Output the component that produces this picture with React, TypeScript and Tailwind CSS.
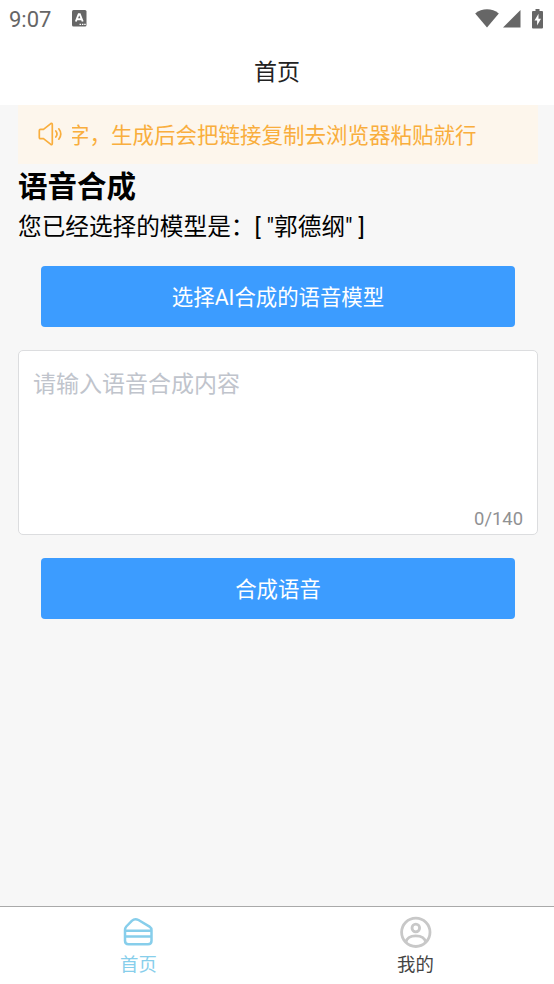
import { useState } from 'react';

const MAX_LENGTH = 140;

function StatusBar() {
  return (
    <div className="flex h-[37px] shrink-0 items-center justify-between px-[10px] text-[#666666]">
      <div className="-ml-px flex items-center">
        <span className="w-[63px] pt-[2px] text-[22px] leading-[36px]">9:07</span>
        <svg width="15" height="17" viewBox="0 0 15 17">
          <rect width="14.5" height="16.5" rx="1.500" fill="#666666" />
          <path d="M3.800 11.500 6.700 4.200h1.100l2.900 7.300M5 9.200h4.500" fill="none" stroke="#fff" strokeWidth="1.900" />
          <path d="M7.500 14.300h1.500M9.900 14.300h1.500M12.200 14.300h1.500" stroke="#fff" strokeWidth="1.300" />
        </svg>
      </div>
      <div className="flex items-center">
        <svg width="24" height="19" viewBox="0 0 24 19" fill="currentColor">
          <path d="M12 18.500.2 4.400C3.600 1.600 7.800.2 12 .2s8.400 1.400 11.800 4.200z" />
        </svg>
        <svg className="ml-[4px]" width="18" height="18" viewBox="0 0 18 18" fill="currentColor">
          <path d="M17.500 0v17.500H0z" />
        </svg>
        <svg className="ml-[11px]" width="12" height="20" viewBox="0 0 12 20">
          <path d="M3.500 0h4v2H10q1 0 1 1v15.500q0 1-1 1H1q-1 0-1-1V3q0-1 1-1h2.500z" fill="#666666" />
          <path d="M6.500 4.800 2.500 11.500h2.600v5L9 9.800H6.500z" fill="#fff" />
        </svg>
      </div>
    </div>
  );
}

function NoticeBar() {
  return (
    <div className="flex h-[59px] shrink-0 items-center bg-[#fdf6ec] pl-[19px] text-[#f9ae3d]">
      <svg className="mb-[2px]" width="26" height="26" viewBox="0 0 26 26" fill="none" stroke="currentColor" strokeWidth="1.700" strokeLinejoin="round" strokeLinecap="round">
        <path d="M3.500 8.300H6.500L13.800 2.600Q15.300 1.800 15.300 3.500V22.500Q15.300 24.200 13.800 23.400L6.500 17.700H3.500Q2.300 17.700 2.300 16.500V9.500Q2.300 8.300 3.500 8.300z" />
        <path d="M18.800 10q2.400 3 0 6M21.800 7.800q4 5.200 0 10.400" />
      </svg>
      <div className="ml-[9px] flex-1 overflow-hidden whitespace-nowrap pt-[2px] text-[21.500px] leading-[30px]">
        <span className="-ml-[4px] inline-block">字，生成后会把链接复制去浏览器粘贴就行</span>
      </div>
    </div>
  );
}

function PrimaryButton({ children }: { children: React.ReactNode }) {
  return (
    <button className="mx-[23px] flex h-[61px] shrink-0 items-center justify-center rounded-[4px] bg-[#3c9cff] pt-[3px] text-[21.400px] text-white">
      {children}
    </button>
  );
}

function HomeIcon() {
  return (
    <svg className="-ml-px" width="32" height="32" viewBox="0 0 32 32" fill="none" stroke="currentColor" strokeWidth="2.500" strokeLinejoin="round">
      <path d="M3 14Q3 12 4.300 10.500L9.800 4.800Q12.800 2 16.500 4L27.500 10.600Q29.500 12 29.500 14.200V24.800Q29.500 28.300 26 28.300H6.500Q3 28.300 3 24.800z" />
      <path d="M3 14.700h26.500M3 20.500h26.500" />
    </svg>
  );
}

function MineIcon() {
  return (
    <svg width="32" height="32" viewBox="0 0 32 32" fill="none" stroke="#c8c8c8" strokeWidth="2.800">
      <circle cx="15.800" cy="16.300" r="14.200" />
      <circle cx="15.800" cy="12" r="3.800" />
      <path d="M5.800 26.500C6.800 21.700 9.800 19.900 15.800 19.900s9 1.800 10 6.600" />
    </svg>
  );
}

export default function App() {
  const [text, setText] = useState('');

  return (
    <div className="flex h-[984px] w-[554px] flex-col overflow-hidden bg-[#f7f7f7] font-[Roboto,'Noto_Sans_CJK_SC',sans-serif]">
      <header className="h-[105px] shrink-0 bg-white">
        <StatusBar />
        <h1 className="pt-px text-center text-[23px] leading-[69px] text-[#222]">首页</h1>
      </header>

      <main className="flex flex-1 flex-col pl-[18px] pr-[16px]">
        <NoticeBar />
        <h2 className="pt-px text-[29.500px] font-bold leading-[44px] text-black">语音合成</h2>
        <p className="mb-[20px] text-[23.650px] leading-[37px] text-black">您已经选择的模型是：[ "郭德纲" ]</p>
        <PrimaryButton>选择AI合成的语音模型</PrimaryButton>

        <div className="my-[23px] flex h-[185px] shrink-0 flex-col rounded-[5px] border border-[#dcdddf] bg-white px-[14px] pt-[16px]">
          <textarea
            className="block w-full flex-1 resize-none bg-transparent text-[23px] leading-[36px] outline-none placeholder:text-[#c0c4cc]"
            placeholder="请输入语音合成内容"
            maxLength={MAX_LENGTH}
            value={text}
            onChange={(e) => setText(e.target.value)}
          />
          <span className="self-end pb-[3px] text-[18.400px] leading-[24px] text-[#909193]">{text.length}/{MAX_LENGTH}</span>
        </div>

        <PrimaryButton>合成语音</PrimaryButton>
      </main>

      <nav className="flex h-[78px] shrink-0 border-t border-[#a9a9a9] bg-white text-[18.400px] leading-[26px]">
        <div className="flex flex-1 flex-col items-center pt-[9px] text-[#87ceeb]">
          <HomeIcon />
          <span className="mt-[4px]">首页</span>
        </div>
        <div className="flex flex-1 flex-col items-center pt-[9px] text-[#444]">
          <MineIcon />
          <span className="mt-[4px]">我的</span>
        </div>
      </nav>
    </div>
  );
}
